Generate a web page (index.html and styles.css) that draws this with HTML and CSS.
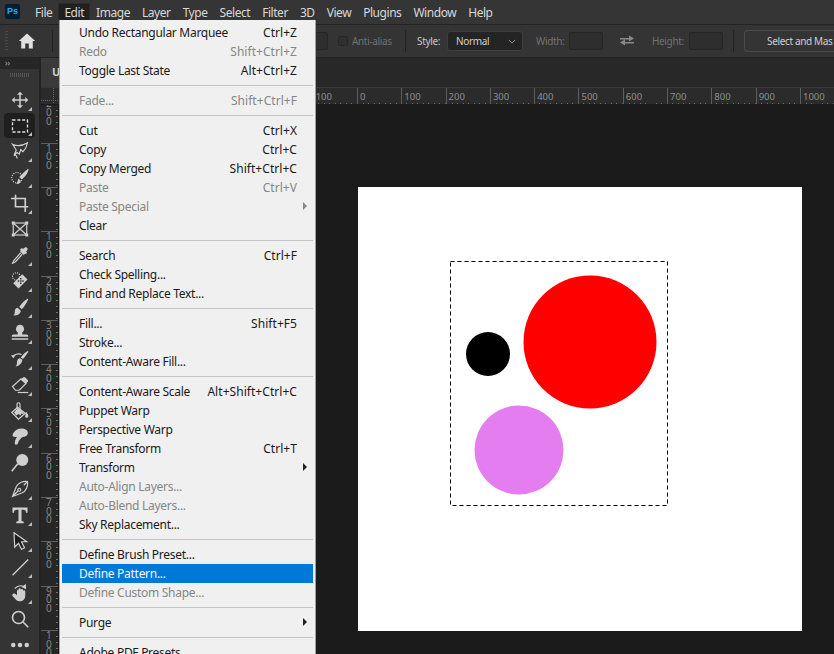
FILE: index.html
```html
<!DOCTYPE html>
<html lang="en">
<head>
<meta charset="utf-8">
<title>Photoshop</title>
<link rel="stylesheet" href="styles.css">
</head>
<body>
<div class="app">
  <header class="menubar">
    <div class="ps-logo">Ps</div>
    <nav class="menus">
      <span>File</span><span class="active">Edit</span><span>Image</span><span>Layer</span><span>Type</span><span>Select</span><span>Filter</span><span>3D</span><span>View</span><span>Plugins</span><span>Window</span><span>Help</span>
    </nav>
  </header>

  <div class="optbar">
    <div class="grip"></div>
    <svg class="home" viewBox="0 0 18 16"><path d="M9 .5 .8 8h2.4v7.5h4V10.500h3.600v5h4V8h2.400z"/></svg>
    <div class="vsep home-sep"></div>
    <div class="field f-feather"></div>
    <div class="check"></div>
    <span class="dim l-aa">Anti-alias</span>
    <div class="vsep aa-sep"></div>
    <span class="lit l-style">Style:</span>
    <div class="select"><span>Normal</span><svg viewBox="0 0 10 6"><path d="M1 1l4 4 4-4"/></svg></div>
    <span class="dim l-width">Width:</span>
    <div class="field f-w"></div>
    <svg class="swap" viewBox="0 0 14 14"><path d="M0 4.500h9V2l5 3-5 3V6H0zM14 8.500H5V6l-5 3 5 3v-2h9z" transform="translate(0 -.5)"/></svg>
    <span class="dim l-height">Height:</span>
    <div class="field f-h"></div>
    <div class="vsep h-sep"></div>
    <div class="maskbtn"><span>Select and Mas</span></div>
  </div>

  <div class="main">
    <aside class="toolbox">
      <div class="collapse">››</div>
      <div class="toolgrip"></div>
      <div class="tools">
        <div class="tool more"><svg viewBox="0 0 24 24"><path class="f" d="M12 1l4 4h-3v6h6V8l4 4-4 4v-3h-6v6h3l-4 4-4-4h3v-6H5v3l-4-4 4-4v3h6V5H8z"/></svg></div>
        <div class="tool sel more"><svg viewBox="0 0 24 24"><rect class="d" x="2" y="4" width="20" height="16"/></svg></div>
        <div class="tool more"><svg viewBox="0 0 24 24"><path class="s" d="M2 3c6 3 12 3 20-2-1 5-3 9-6 12l-3-3-2 6-3-2-4 4c1-3 2-5 3-7C6 9 4 6 2 3zM4 18c2-1 4 0 4 4"/></svg></div>
        <div class="tool more"><svg viewBox="0 0 24 24"><circle class="dt" cx="8" cy="13" r="7"/><path class="f" d="M23 1c1 1 0 3-2 7-2 3-5 6-7 7l-3-3c3-3 7-8 12-11zM10 14l3 3c0 3-3 5-6 4 2-2 2-5 3-7z"/></svg></div>
        <div class="tool more"><svg viewBox="0 0 24 24"><path class="s2" d="M0 6h5M6 1v16h17M6 6h13v18"/></svg></div>
        <div class="tool"><svg viewBox="0 0 24 24"><rect class="s" x="3" y="4" width="18" height="16"/><path class="s" d="M3 4l18 16M21 4 3 20"/><path class="f" d="M1 2h4v4H1zM19 2h4v4h-4zM1 18h4v4H1zM19 18h4v4h-4z"/></svg></div>
        <div class="tool more"><svg viewBox="0 0 24 24"><path class="s" d="M13 9 4 19l-2 4 4-2 9-10"/><path class="f" d="M12 7l5 5 2-2 1 .5L21.500 9 20 7.500l2-2.500c1-2-1.500-4-3.500-3L16 4l-1.500-1.500L12 4.500l1 1z"/></svg></div>
        <div class="tool more"><svg viewBox="0 0 24 24"><path class="f" d="M15 3l7 7L10 22l-7-7z"/><circle class="dt" cx="7" cy="6" r="5"/><path class="h" d="M12 8h2v2h-2zM15 11h2v2h-2zM12 14h2v2h-2zM9 11h2v2H9zM12 11h2v2h-2z"/></svg></div>
        <div class="tool more"><svg viewBox="0 0 24 24"><path class="f" d="M22 1c1 0 1 1 .5 2-2 4-5 9-8 12L11 12c2-3 7-9 11-11zM9 13l4 4c0 4-4 7-10 6 2-1 2-3 2-5 0-3 2-5 4-5z"/></svg></div>
        <div class="tool more"><svg viewBox="0 0 24 24"><path class="f" d="M12 1a5.500 5.500 0 0 1 3 10v3h6c1 0 2 1 2 2v1H1v-1c0-1 1-2 2-2h6v-3a5.500 5.500 0 0 1 3-10zM1 19h22v2H1z"/></svg></div>
        <div class="tool more"><svg viewBox="0 0 24 24"><path class="f" d="M23 1c0 1 0 2-1 3-2 3-4 6-6 8l-3-2c2-3 6-7 10-9zM12 11l3 2c0 5-4 8-9 9 2-2 2-4 2-6 0-3 2-5 4-5z"/><path class="s" d="M2 9c2-3 8-5 12-3"/><path class="f" d="M0 7h6l-3 4z"/></svg></div>
        <div class="tool more"><svg viewBox="0 0 24 24"><path class="s" d="M2 14 13 4l7 6-9 9H6z"/><path class="f" d="M13 4l7 6 2-2c1-1 1-2 0-3l-3-3c-1-1-2-1-3 0z"/><path class="s" d="M9 22h14"/></svg></div>
        <div class="tool more"><svg viewBox="0 0 24 24"><path class="s" d="M9 7 1 14l9 9 9-8z"/><path class="f" d="M9 8l9 7-3 1-1-1-1 3-3-2-3 2-3-4z"/><path class="s" d="M8 9V3a2 2 0 0 1 4 0v8"/><path class="f" d="M20 13c2 2 4 5 3 7s-5 1-4-2z"/></svg></div>
        <div class="tool more"><svg viewBox="0 0 24 24"><path class="f" d="M8 2c4-2 10-2 13 1 2 2 2 5 0 7-1 1-3 2-5 2l-2 1c-2 2-4 4-5 8-1 2-4 2-4-1 0-3 1-5 3-8-3 0-6 0-6-2 0-3 3-6 6-8z"/></svg></div>
        <div class="tool"><svg viewBox="0 0 24 24"><circle class="f" cx="15" cy="8" r="8"/><path class="s2" d="M9 13 1 23"/></svg></div>
        <div class="tool more"><svg viewBox="0 0 24 24"><path class="s" d="M22 2C16 1 9 4 7 9L2 22l13-5c5-2 8-9 7-15zM2 22l8-8M22 2l-5 5"/><circle class="s" cx="11" cy="13" r="2"/></svg></div>
        <div class="tool more"><svg viewBox="0 0 24 24"><path class="f" d="M2 2h20v7h-2c0-3-1-4-4-4h-2v15l3 1v2H7v-2l3-1V5H8C5 5 4 6 4 9H2z"/></svg></div>
        <div class="tool more"><svg viewBox="0 0 24 24"><path class="k" d="M4 1 5 20l5-5 4 8 4-2-4-8h7z"/></svg></div>
        <div class="tool more"><svg viewBox="0 0 24 24"><path class="s" d="M2 23 23 2"/></svg></div>
        <div class="tool more"><svg viewBox="0 0 24 24"><path class="f" d="M4 13c1-1 3 1 4 2V9c0-2 2-2 2 0V7c0-2 3-2 3 0v1c0-2 3-2 3 0v1c0-1 3-1 3 1v6c0 4-3 7-7 7s-6-2-7-4l-3-3c-1-1 1-4 2-3z"/><path class="s" d="M5 6c3-3 8-5 13-2"/><path class="f" d="M20 0v7l-6-3z"/></svg></div>
        <div class="tool"><svg viewBox="0 0 24 24"><circle class="s2" cx="10" cy="10" r="8"/><path class="s2" d="m16 16 7 7"/></svg></div>
        <div class="tool"><svg viewBox="0 0 24 24"><circle class="f" cx="3" cy="12" r="3"/><circle class="f" cx="12" cy="12" r="3"/><circle class="f" cx="21" cy="12" r="3"/></svg></div>
      </div>
    </aside>

    <section class="workspace">
      <div class="tabbar"><div class="tab">U</div></div>
      <div class="hruler">
        <div class="corner"></div>
        <div class="hticks">
          <span>100</span><span>0</span><span>100</span><span>200</span><span>300</span><span>400</span><span>500</span><span>600</span><span>700</span><span>800</span><span>900</span><span>1000</span>
        </div>
      </div>
      <div class="body">
        <div class="vruler">
          <div class="vticks">
            <span>200</span><span>100</span><span>0</span><span>100</span><span>200</span><span>300</span><span>400</span><span>500</span><span>600</span><span>700</span><span>800</span><span>900</span><span>1000</span>
          </div>
        </div>
        <div class="pasteboard">
          <svg class="doc" viewBox="0 0 444 444">
            <rect width="444" height="444" fill="#fff"/>
            <circle cx="232" cy="155" r="66.500" fill="#fe0000"/>
            <circle cx="130" cy="167" r="22" fill="#000"/>
            <circle cx="161" cy="263" r="44.500" fill="#e47ef0"/>
            <rect x="92.500" y="74.500" width="217" height="244" fill="none" stroke="#000" stroke-dasharray="4 3"/>
          </svg>
        </div>
      </div>
    </section>
  </div>
</div>

<div class="menu">
  <div class="row"><span>Undo Rectangular Marquee</span><kbd>Ctrl+Z</kbd></div>
  <div class="row off"><span>Redo</span><kbd>Shift+Ctrl+Z</kbd></div>
  <div class="row"><span>Toggle Last State</span><kbd>Alt+Ctrl+Z</kbd></div>
  <div class="sep"></div>
  <div class="row off"><span>Fade...</span><kbd>Shift+Ctrl+F</kbd></div>
  <div class="sep"></div>
  <div class="row"><span>Cut</span><kbd>Ctrl+X</kbd></div>
  <div class="row"><span>Copy</span><kbd>Ctrl+C</kbd></div>
  <div class="row"><span>Copy Merged</span><kbd>Shift+Ctrl+C</kbd></div>
  <div class="row off"><span>Paste</span><kbd>Ctrl+V</kbd></div>
  <div class="row off sub"><span>Paste Special</span></div>
  <div class="row"><span>Clear</span></div>
  <div class="sep"></div>
  <div class="row"><span>Search</span><kbd>Ctrl+F</kbd></div>
  <div class="row"><span>Check Spelling...</span></div>
  <div class="row"><span>Find and Replace Text...</span></div>
  <div class="sep"></div>
  <div class="row"><span>Fill...</span><kbd>Shift+F5</kbd></div>
  <div class="row"><span>Stroke...</span></div>
  <div class="row"><span>Content-Aware Fill...</span></div>
  <div class="sep"></div>
  <div class="row"><span>Content-Aware Scale</span><kbd>Alt+Shift+Ctrl+C</kbd></div>
  <div class="row"><span>Puppet Warp</span></div>
  <div class="row"><span>Perspective Warp</span></div>
  <div class="row"><span>Free Transform</span><kbd>Ctrl+T</kbd></div>
  <div class="row sub"><span>Transform</span></div>
  <div class="row off"><span>Auto-Align Layers...</span></div>
  <div class="row off"><span>Auto-Blend Layers...</span></div>
  <div class="row"><span>Sky Replacement...</span></div>
  <div class="sep"></div>
  <div class="row"><span>Define Brush Preset...</span></div>
  <div class="row hot"><span>Define Pattern...</span></div>
  <div class="row off"><span>Define Custom Shape...</span></div>
  <div class="sep"></div>
  <div class="row sub"><span>Purge</span></div>
  <div class="sep"></div>
  <div class="row"><span>Adobe PDF Presets</span></div>
</div>
</body>
</html>
```

FILE: styles.css
```css
* { box-sizing: border-box; }
html, body { margin: 0; height: 100%; overflow: hidden; background: #1b1b1b; }
body { font: 12px "Noto Sans", sans-serif; color: #d4d4d4; position: relative; }

.app { display: flex; flex-direction: column; height: 654px; width: 834px; }

.menubar { height: 25px; flex: none; display: flex; align-items: center; background: #353535; border-bottom: 1px solid #232323; }
.ps-logo { width: 15px; height: 15px; margin-left: 5px; margin-top: -1px; border-radius: 2px; background: #001e36; color: #31a8ff; font: bold 9px/15px "Liberation Sans", sans-serif; text-align: center; }
.menus { display: flex; margin-left: 9px; margin-top: -1px; letter-spacing: -0.45px; }
.menus span { padding: 0 5px; height: 18px; line-height: 17px; color: #d8d8d8; border: 1px solid transparent; border-bottom: 0; }
.menus span.active { background: #202020; border-color: #2b2b2b; }

.optbar { height: 33px; flex: none; position: relative; display: flex; align-items: center; background: #343434; border-bottom: 1px solid #222; font-size: 10px; letter-spacing: -0.35px; overflow: hidden; }
.grip { width: 5px; height: 20px; margin-left: 5px; background: repeating-linear-gradient(#4a4a4a 0 1px, transparent 1px 3px); }
.home { width: 18px; height: 16px; margin-left: 10px; fill: #e0e0e0; flex: none; }
.vsep { width: 1px; height: 22px; background: #232323; flex: none; }
.home-sep { margin-left: 16px; }
.field { height: 18px; background: #2e2e2e; border: 1px solid #262626; border-radius: 2px; flex: none; }
.f-feather { width: 40px; margin-left: 235px; }
.check { width: 10px; height: 10px; margin-left: 10px; border: 1px solid #262626; border-radius: 2px; background: #303030; flex: none; }
.dim { color: #717171; flex: none; }
.lit { color: #c8c8c8; flex: none; }
.l-aa { margin-left: 4px; width: 38px; white-space: nowrap; }
.aa-sep { margin-left: 15px; }
.l-style { margin-left: 11px; width: 30px; }
.select { width: 76px; height: 20px; display: flex; align-items: center; justify-content: space-between; padding: 0 6px 0 8px; background: #242424; border: 1px solid #3e3e3e; border-radius: 3px; color: #d0d0d0; flex: none; }
.select svg { width: 8px; height: 5px; fill: none; stroke: #b0b0b0; }
.l-width { margin-left: 13px; width: 33px; }
.f-w { width: 34px; }
.swap { width: 14px; height: 14px; margin-left: 17px; fill: #8a8a8a; flex: none; }
.l-height { margin-left: 18px; width: 37px; }
.f-h { width: 34px; }
.h-sep { margin-left: 10px; }
.maskbtn { margin-left: 10px; width: 90px; height: 22px; line-height: 20px; padding-left: 22px; border: 1px solid #4a4a4a; border-right: 0; border-radius: 4px 0 0 4px; color: #d0d0d0; flex: none; white-space: nowrap; }

.main { flex: 1; display: flex; min-height: 0; }

.toolbox { width: 41px; flex: none; background: #343434; border-right: 2px solid #232323; }
.collapse { height: 11px; background: #262626; color: #bbb; font-size: 8px; line-height: 9px; padding-left: 5px; }
.toolgrip { height: 4px; margin: 4px 10px 0; background: repeating-linear-gradient(90deg, #555 0 1px, transparent 1px 2px); }
.tools { margin-top: 10px; }
.tool { height: 26px; width: 31px; margin-left: 4px; position: relative; display: flex; align-items: center; justify-content: center; }
.tool svg { width: 18px; height: 18px; }
.tool.more::after { content: ""; position: absolute; right: 3px; bottom: 2px; border: 2px solid transparent; border-right-color: #bdbdbd; border-bottom-color: #bdbdbd; }
.tool.sel { background: #1f1f1f; border-radius: 4px; height: 25px; }
.f { fill: #cfcfcf; }
.s { fill: none; stroke: #cfcfcf; stroke-width: 1.6; }
.s2 { fill: none; stroke: #cfcfcf; stroke-width: 2.2; }
.d { fill: none; stroke: #e2e2e2; stroke-width: 1.8; stroke-dasharray: 4 2.500; }
.dt { fill: none; stroke: #cfcfcf; stroke-width: 1.5; stroke-dasharray: 1.500 1.500; }
.h { fill: #343434; }
.k { fill: #1c1c1c; stroke: #cfcfcf; stroke-width: 1.600; }

.workspace { flex: 1; display: flex; flex-direction: column; min-width: 0; }
.tabbar { height: 29px; flex: none; background: #282828; }
.tab { width: 120px; height: 29px; padding-left: 11px; line-height: 28px; font-weight: 700; font-size: 11px; background: #3a3a3a; color: #d0d0d0; }

.hruler { height: 18px; flex: none; display: flex; background: #2b2b2b; border-top: 1px solid #383838; border-bottom: 1px solid #1a1a1a; overflow: hidden; }
.corner { width: 18px; flex: none; background-image: repeating-linear-gradient(90deg, #666 0 1px, transparent 1px 2px), repeating-linear-gradient(#666 0 1px, transparent 1px 2px); background-size: 18px 1px, 1px 18px; background-position: 0 12px, 12px 0; background-repeat: no-repeat; }
.hticks { display: flex; padding-left: 253.700px; }
.hticks span { width: 44.300px; flex: none; height: 17px; padding-left: 2px; border-left: 1px solid #5e5e5e; font-size: 9.500px; line-height: 17px; color: #8e8e8e; background: repeating-linear-gradient(90deg, transparent 0 4.500px, #707070 4.500px 5.500px) bottom / 100% 2px no-repeat; }

.body { flex: 1; display: flex; min-height: 0; }
.vruler { width: 18px; flex: none; background: #262626; border-right: 1px solid #1a1a1a; overflow: hidden; }
.vticks { margin-top: -6.600px; }
.vticks span { display: block; height: 44.300px; width: 17px; padding: 0 5px 0 5px; border-top: 1px solid #5e5e5e; font-size: 10px; line-height: 8.700px; color: #858585; word-break: break-all; overflow: hidden; background: repeating-linear-gradient(transparent 0 5px, #707070 5px 6px) right / 2px 100% no-repeat; }

.pasteboard { flex: 1; background: #1b1b1b; padding: 82px 0 0 299px; }
.doc { display: block; width: 444px; height: 444px; }

.menu { position: absolute; left: 59px; top: 20px; width: 257px; height: 640px; padding: 3px 3px 0; background: #f0f0f0; border: 1px solid #a0a0a0; border-width: 0 1px 0 1px; color: #1a1a1a; overflow: hidden; }
.row { height: 19px; display: flex; justify-content: space-between; align-items: center; padding: 0 16px 0 17px; position: relative; white-space: nowrap; margin-left: -1px; margin-right: -1px; }
.row span { letter-spacing: -0.28px; }
.row kbd { font: inherit; letter-spacing: 0.05px; }
.row.off { color: #868686; }
.row.hot { background: #0078d7; color: #f2f8fd; }
.row.sub::after { content: ""; position: absolute; right: 6px; top: 5px; border: 4px solid transparent; border-left-color: #222; border-right-width: 0; }
.row.off.sub::after { border-left-color: #868686; }
.sep { height: 11px; margin: 0 -1px; padding-top: 5px; }
.sep::before { content: ""; display: block; height: 1px; background: #c4c4c4; }
```
